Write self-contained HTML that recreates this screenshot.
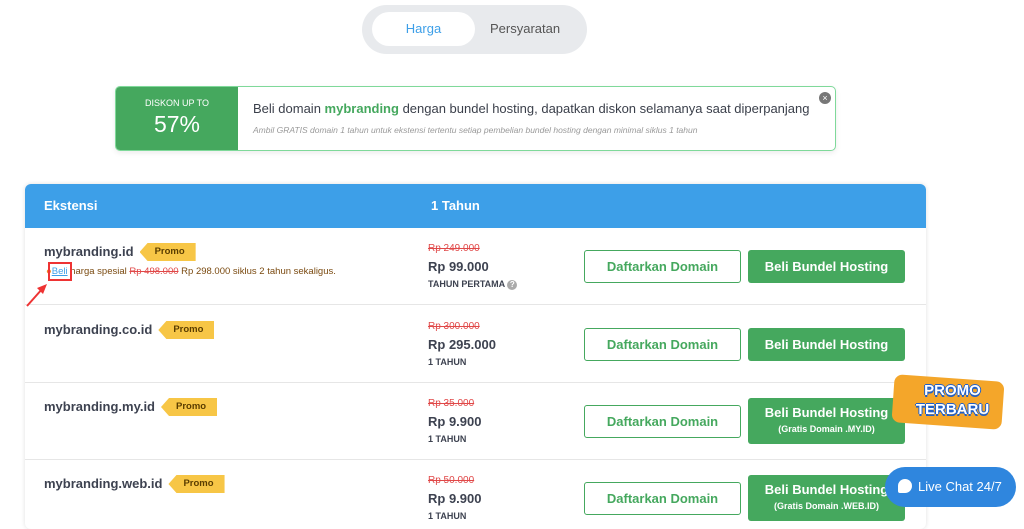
<!DOCTYPE html>
<html><head><meta charset="utf-8"><style>
*{box-sizing:border-box;margin:0;padding:0}
body{width:1024px;height:525px;overflow:hidden;background:#fff;font-family:"Liberation Sans",sans-serif;color:#3a3f4a;position:relative}
.abs{position:absolute}
.tabs{left:362px;top:5px;width:225px;height:49px;background:#e8eaed;border-radius:25px}
.tab1{left:10px;top:7px;width:103px;height:34px;background:#fff;border-radius:17px;color:#3d9fe8;font-size:13px;text-align:center;line-height:34px}
.tab2{left:128px;top:7px;color:#555;font-size:13px;line-height:34px}
.banner{left:115px;top:86px;width:721px;height:65px;border:1px solid #7fd99a;border-radius:5px;overflow:hidden;box-shadow:0 2px 6px rgba(0,0,0,.08)}
.bl{left:0;top:0;width:122px;height:65px;background:#45a85e;color:#fff;text-align:center}
.tbl{left:25px;top:184px;width:901px;height:345px;border-radius:6px;overflow:hidden;box-shadow:0 0 5px rgba(0,0,0,.12)}
.hd{left:0;top:0;width:901px;height:44px;background:#3d9fe8;color:#fff;font-size:13px;font-weight:bold;line-height:44px}
.row{left:0;width:901px;height:77px;border-bottom:1px solid #e6e6e6}
.nm{left:19px;top:13px;font-size:13px;font-weight:bold;color:#3d4250;display:flex;align-items:center;line-height:22px}
.promo{margin-left:6px;height:18px;background:#f7c646;color:#5a3d00;font-size:9.5px;font-weight:bold;line-height:18px;padding:0 11px 0 15px;clip-path:polygon(8px 0,100% 0,100% 100%,8px 100%,0 50%)}
.old{left:403px;top:15px;font-size:10px;color:#e04848;text-decoration:line-through}
.pr{left:403px;top:31px;font-size:13px;font-weight:bold;color:#3d4250}
.sub{left:403px;top:51px;font-size:9px;font-weight:bold;color:#3d4250}
.b1{left:559px;top:22px;width:157px;height:33px;border:1px solid #45a85e;border-radius:3px;color:#45a85e;font-size:13px;font-weight:bold;text-align:center;line-height:31px}
.b2{left:723px;top:22px;width:157px;height:33px;background:#45a85e;border-radius:3px;color:#fff;font-size:13px;font-weight:bold;text-align:center;line-height:33px}
.b2s{line-height:15px;padding-top:7px;height:46px;top:15px}
.b2s small{font-size:9px;display:block;margin-top:2px}
</style></head><body>
<div class="abs tabs"><div class="abs tab1">Harga</div><div class="abs tab2">Persyaratan</div></div>
<div class="abs banner">
<div class="abs bl"><div style="font-size:9px;margin-top:11px">DISKON UP TO</div><div style="font-size:23px;margin-top:3px">57%</div></div>
<div class="abs" style="left:137px;top:14px;font-size:13px;color:#3a3f4a">Beli domain <b style="color:#45a85e">mybranding</b> dengan bundel hosting, dapatkan diskon selamanya saat diperpanjang</div>
<div class="abs" style="left:137px;top:38px;font-size:8.5px;font-style:italic;color:#999">Ambil GRATIS domain 1 tahun untuk ekstensi tertentu setiap pembelian bundel hosting dengan minimal siklus 1 tahun</div>
<div class="abs" style="left:703px;top:5px;width:12px;height:12px;border-radius:50%;background:#777;color:#fff;font-size:9px;line-height:12px;text-align:center">×</div>
</div>
<div class="abs tbl">
<div class="abs hd"><span class="abs" style="left:19px">Ekstensi</span><span class="abs" style="left:406px">1 Tahun</span></div>
<div class="abs row" style="top:44px">
<div class="abs nm">mybranding.id<span class="promo">Promo</span></div>
<div class="abs" style="left:21px;top:38px;font-size:9.5px;color:#7a4a10"><span style="color:#f08a20">&#9679;</span><span style="color:#3d9fe8;text-decoration:underline;outline:2px solid #e33;outline-offset:2px">Beli</span> harga spesial <s style="color:#e04848">Rp 498.000</s> Rp 298.000 siklus 2 tahun sekaligus.</div>
<svg class="abs" style="left:0;top:54px" width="26" height="26"><line x1="2" y1="24" x2="18" y2="6" stroke="#e33" stroke-width="2"/><polygon points="22,2 12,6 18,12" fill="#e33"/></svg>
<div class="abs old">Rp 249.000</div><div class="abs pr">Rp 99.000</div><div class="abs sub">TAHUN PERTAMA <span style="display:inline-block;width:10px;height:10px;border-radius:50%;background:#aaa;color:#fff;font-size:8px;text-align:center;line-height:10px">?</span></div>
<div class="abs b1">Daftarkan Domain</div><div class="abs b2">Beli Bundel Hosting</div></div>
<div class="abs row" style="top:122px">
<div class="abs nm">mybranding.co.id<span class="promo">Promo</span></div>
<div class="abs old">Rp 300.000</div><div class="abs pr">Rp 295.000</div><div class="abs sub">1 TAHUN</div>
<div class="abs b1">Daftarkan Domain</div><div class="abs b2">Beli Bundel Hosting</div></div>
<div class="abs row" style="top:199px">
<div class="abs nm">mybranding.my.id<span class="promo">Promo</span></div>
<div class="abs old">Rp 35.000</div><div class="abs pr">Rp 9.900</div><div class="abs sub">1 TAHUN</div>
<div class="abs b1">Daftarkan Domain</div><div class="abs b2 b2s">Beli Bundel Hosting<small>(Gratis Domain .MY.ID)</small></div></div>
<div class="abs row" style="top:276px">
<div class="abs nm">mybranding.web.id<span class="promo">Promo</span></div>
<div class="abs old">Rp 50.000</div><div class="abs pr">Rp 9.900</div><div class="abs sub">1 TAHUN</div>
<div class="abs b1">Daftarkan Domain</div><div class="abs b2 b2s">Beli Bundel Hosting<small>(Gratis Domain .WEB.ID)</small></div></div>
</div>
<div class="abs" style="left:893px;top:378px;width:110px;height:48px;background:#f4a62a;border-radius:8px;transform:rotate(4deg)"></div>
<div class="abs" style="left:905px;top:381px;width:95px;font-size:15px;font-weight:bold;color:#fff;line-height:19px;text-align:center;text-shadow:0 2px 0 #1f5fc8,0 -1px 0 #1f5fc8,1px 0 0 #1f5fc8,-1px 0 0 #1f5fc8">PROMO<br>TERBARU</div>
<div class="abs" style="left:885px;top:467px;width:131px;height:40px;background:#2f86de;border-radius:20px;color:#fff;font-size:13px;line-height:40px"><span style="display:inline-block;width:14px;height:14px;background:#fff;border-radius:50% 50% 50% 2px;vertical-align:-2px;margin:0 6px 0 13px"></span>Live Chat 24/7</div>
</body></html>
